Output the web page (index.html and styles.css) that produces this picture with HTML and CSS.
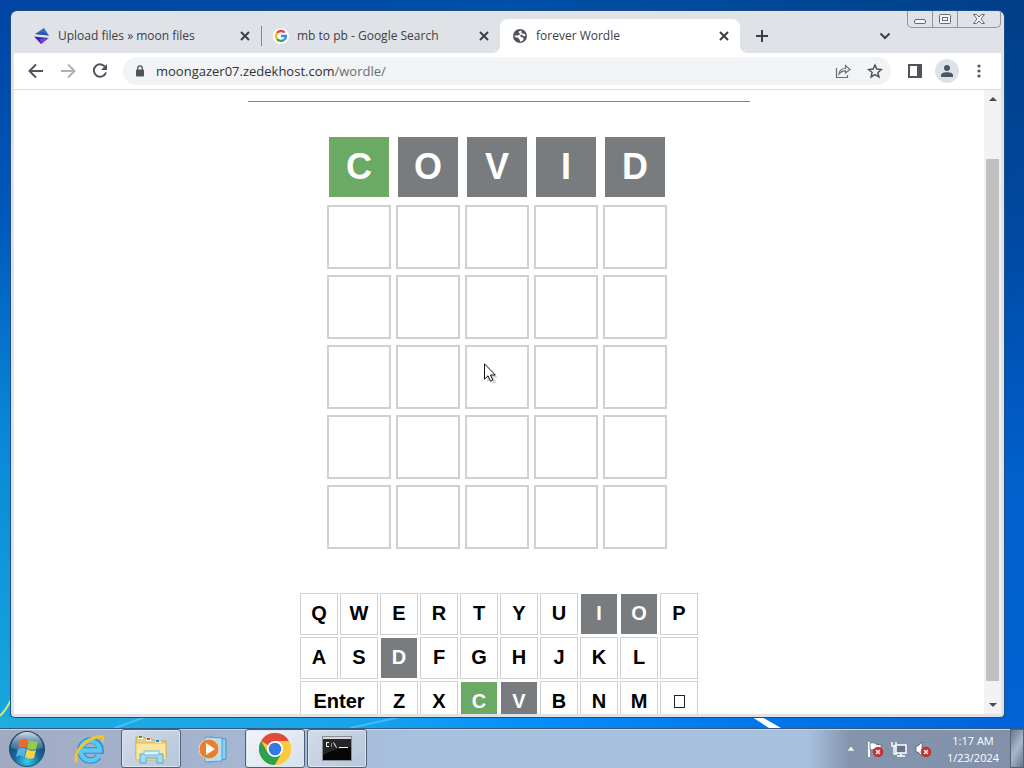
FILE: index.html
```html
<!DOCTYPE html>
<html lang="en">
<head>
<meta charset="utf-8">
<title>forever Wordle</title>
<link rel="stylesheet" href="styles.css">
</head>
<body>
<div class="desktop">
  <main class="workspace">
    <svg class="streaks" viewBox="0 0 1024 728" preserveAspectRatio="none" aria-hidden="true">
      <path d="M0 716Q6 710 11 700" stroke="#c8ee70" stroke-width="2" fill="none"/>
      <path d="M115 728L145 717M350 728L400 717" stroke="#8fe0ff" stroke-width="2" opacity=".4"/>
      <path d="M752 717h10l19 11h-12z" fill="#fff"/>
    </svg>
    <section class="window">
      <header class="tabstrip">
        <div class="tabs">
          <div class="tab">
            <svg class="favicon" viewBox="0 0 16 16"><path d="M1 6L10 0l5 7.500z" fill="#3a6cc0"/><path d="M1 6l8-2 6 3.500z" fill="#2452a8"/><path d="M0 8.500l14.500 1.500L7 16z" fill="#4b1fb4"/><path d="M6 11l8.500-1L7 16z" fill="#6a48cc"/></svg>
            <span class="title">Upload files » moon files</span>
            <button class="close" aria-label="Close tab"><svg viewBox="0 0 10 10"><path d="M1 1l8 8M9 1L1 9"/></svg></button>
          </div>
          <div class="tab divided">
            <svg class="favicon" viewBox="0 0 16 16"><circle cx="8" cy="8" r="8" fill="#fff"/><g fill="none" stroke-width="2.3"><path d="M4 5A5 5 0 0 1 11.6 4.5" stroke="#ea4335"/><path d="M4 5a5 5 0 0 0 0 6" stroke="#fbbc05"/><path d="M4 11a5 5 0 0 0 7.3.7" stroke="#34a853"/><path d="M8 8h5a5 5 0 0 1-1.700 3.700" stroke="#4285f4"/></g></svg>
            <span class="title">mb to pb - Google Search</span>
            <button class="close" aria-label="Close tab"><svg viewBox="0 0 10 10"><path d="M1 1l8 8M9 1L1 9"/></svg></button>
          </div>
          <div class="tab active">
            <svg class="favicon" viewBox="0 0 16 16"><circle cx="8" cy="8" r="7" fill="#50545a"/><path d="M9 2.500C6.500 3 6 4.500 7.500 5.500S6.500 7.500 5 7.500H2.500C2.500 9 3.500 9.500 5 9.500s1.500 1.500 2.500 2 0 1.500.5 2c3 0 3-1 3.500-2.500S9.500 9.500 8.500 8.500 9 6.500 10 7s1.500 1.500 3.500 1C13.500 6 12 5.500 10.500 5.500S10 3.500 9 2.500z" fill="#fff"/></svg>
            <span class="title">forever Wordle</span>
            <button class="close" aria-label="Close tab"><svg viewBox="0 0 10 10"><path d="M1 1l8 8M9 1L1 9"/></svg></button>
          </div>
        </div>
        <button class="newtab" aria-label="New tab"><svg viewBox="0 0 12 12"><path d="M6 0v12M0 6h12"/></svg></button>
        <button class="tabsearch" aria-label="Search tabs"><svg viewBox="0 0 12 8"><path d="M1.500 1.500L6 6l4.500-4.500"/></svg></button>
        <div class="caption">
          <button aria-label="Minimize"><svg viewBox="0 0 14 12"><rect x="1.500" y="6.500" width="11" height="4" rx="1.500"/></svg></button>
          <button aria-label="Maximize"><svg viewBox="0 0 14 12"><rect x="1.500" y="1.500" width="11" height="9" rx="1"/><rect x="4.500" y="4.500" width="5" height="3"/></svg></button>
          <button class="wide" aria-label="Close"><svg viewBox="0 0 14 12"><path d="M1.500 1.500h3L7 4l2.500-2.500h3L9 6l3.500 4.500h-3L7 8l-2.500 2.500h-3L5 6z"/></svg></button>
        </div>
      </header>
      <div class="client">
        <nav class="toolbar">
          <button class="tool" aria-label="Back"><svg viewBox="0 0 16 16"><path d="M15 8H2M8 1.500L1.500 8 8 14.500" class="line"/></svg></button>
          <button class="tool off" aria-label="Forward"><svg viewBox="0 0 16 16"><path d="M1 8h13M8 1.500L14.500 8 8 14.500" class="line"/></svg></button>
          <button class="tool" aria-label="Reload"><svg viewBox="0 0 16 16"><path d="M13.500 4.500A6.200 6.200 0 1 0 14 9.500" class="line"/><path d="M15 1v6H9z" fill="#50545a"/></svg></button>
          <div class="omnibox">
            <svg class="lock" viewBox="0 0 10 12"><rect x="1" y="4.500" width="8" height="7" rx="1" fill="#50545a"/><path d="M2.800 5V3a2.200 2.200 0 0 1 4.400 0v2" fill="none" stroke="#50545a" stroke-width="1.300"/></svg>
            <a class="url" href="#">moongazer07.zedekhost.com<span>/wordle/</span></a>
            <button class="tool" aria-label="Share"><svg viewBox="0 0 16 16"><path d="M1.500 5v9.500h11V12M4 11c.5-4 3-5.500 6.500-5.500V2.500L15 6.500 10.500 10V7.800C7.500 7.800 5.500 9 4 11z" fill="none" stroke="#6a6e74" stroke-width="1.200"/></svg></button>
            <button class="tool" aria-label="Bookmark"><svg viewBox="0 0 16 16"><path d="M8 2l1.800 4.100 4.500.4-3.400 3 1 4.400L8 11.600l-3.900 2.300 1-4.400-3.400-3 4.500-.4z" fill="none" stroke="#50545a" stroke-width="1.500"/></svg></button>
          </div>
          <button class="tool" aria-label="Side panel"><svg viewBox="0 0 16 16"><path d="M2 2h12v12H2z" fill="none" stroke="#50545a" stroke-width="2"/><path d="M10 2h4v12h-4z" fill="#50545a"/></svg></button>
          <button class="tool avatar" aria-label="Profile"><svg viewBox="0 0 16 16"><circle cx="8" cy="5" r="3" fill="#4a5768"/><path d="M2 14v-1.500C2 10 5 9.300 8 9.300s6 .7 6 3.200V14z" fill="#4a5768"/></svg></button>
          <button class="tool" aria-label="Menu"><svg viewBox="0 0 16 16" fill="#50545a"><circle cx="8" cy="3" r="1.600"/><circle cx="8" cy="8" r="1.600"/><circle cx="8" cy="13" r="1.600"/></svg></button>
        </nav>
        <div class="viewport">
          <article class="page">
            <hr>
            <div class="board">
              <div class="tile hit">C</div><div class="tile miss">O</div><div class="tile miss">V</div><div class="tile miss">I</div><div class="tile miss">D</div>
              <div class="tile"></div><div class="tile"></div><div class="tile"></div><div class="tile"></div><div class="tile"></div>
              <div class="tile"></div><div class="tile"></div><div class="tile"></div><div class="tile"></div><div class="tile"></div>
              <div class="tile"></div><div class="tile"></div><div class="tile"></div><div class="tile"></div><div class="tile"></div>
              <div class="tile"></div><div class="tile"></div><div class="tile"></div><div class="tile"></div><div class="tile"></div>
              <div class="tile"></div><div class="tile"></div><div class="tile"></div><div class="tile"></div><div class="tile"></div>
            </div>
            <div class="keyboard">
              <button>Q</button><button>W</button><button>E</button><button>R</button><button>T</button><button>Y</button><button>U</button><button class="miss">I</button><button class="miss">O</button><button>P</button>
              <button>A</button><button>S</button><button class="miss">D</button><button>F</button><button>G</button><button>H</button><button>J</button><button>K</button><button>L</button><button aria-label="Blank"></button>
              <button class="enter">Enter</button><button>Z</button><button>X</button><button class="hit">C</button><button class="miss">V</button><button>B</button><button>N</button><button>M</button><button aria-label="Backspace"><span class="tofu"></span></button>
            </div>
          </article>
          <div class="scrollbar">
            <button aria-label="Scroll up"><svg viewBox="0 0 8 4"><path d="M0 4l4-4 4 4z"/></svg></button>
            <div class="before"></div>
            <div class="thumb"></div>
            <div class="after"></div>
            <button aria-label="Scroll down"><svg viewBox="0 0 8 4"><path d="M0 0h8L4 4z"/></svg></button>
          </div>
        </div>
      </div>
    </section>
    <svg class="cursor" viewBox="0 0 14 21" aria-hidden="true"><path d="M3 3v16l4-3 2.500 5 3-1.500L10 15h4z" fill="#000" opacity=".15"/><path d="M.5.8v15.400L4 12.800l2.400 5.400 2.400-1-2.300-5.200h4.800z" fill="#fff" stroke="#111"/></svg>
  </main>
  <footer class="taskbar">
    <button class="start" aria-label="Start"><svg viewBox="0 0 36 36">
      <defs><radialGradient id="orb" cx=".5" cy=".85" r=".8"><stop offset="0" stop-color="#35d0ee"/><stop offset=".45" stop-color="#176a9c"/><stop offset="1" stop-color="#123a60"/></radialGradient><linearGradient id="shine" x2="0" y2="1"><stop offset="0" stop-color="#e8f2fa" stop-opacity=".9"/><stop offset="1" stop-color="#7fa8c8" stop-opacity=".25"/></linearGradient></defs>
      <circle cx="18" cy="18" r="17.500" fill="url(#orb)" stroke="#254a6c"/><path d="M2 17a16 16 0 0 1 32 0Q18 22 2 17z" fill="url(#shine)"/>
      <path d="M11 9q4-3 8 0l-2 8q-4-2-8 0z" fill="#ee6a2c"/><path d="M20 9q4 3 9 1l-2 8q-5 2-9-1z" fill="#9acb45"/><path d="M9 18q4-2 8 0l-2 8q-4-3-8 0z" fill="#55b2ea"/><path d="M18 18q4 3 9 1l-2 8q-5 2-9-1z" fill="#fbd345"/></svg></button>
    <button class="task" aria-label="Internet Explorer"><svg viewBox="0 0 32 32"><g fill="none"><path d="M9 17.500h18.500A10 10 0 1 0 25.500 23.500" stroke="#268fd0" stroke-width="6.500"/><path d="M9 17.500h18A9.700 9.700 0 1 0 25.500 23" stroke="#5cc8f2" stroke-width="4.500"/><path d="M4 29.500C-1 21 12 4 29 3.500c2 0 1 3 0 5" stroke="#f0c62c" stroke-width="2.800"/></g></svg></button>
    <button class="task open" aria-label="Windows Explorer"><svg viewBox="0 0 32 32"><path d="M1 4h8l2 2h6l2 2h12v16H1z" fill="#e9cf76" stroke="#c9a94c"/><path d="M3 5h5M11 7h5M20 9h6" stroke="#fff" stroke-width="2"/><path d="M4 4h3" stroke="#35a244" stroke-width="2"/><path d="M12 6h3" stroke="#cf5136" stroke-width="2"/><path d="M21 8h3" stroke="#2f83c4" stroke-width="2"/><path d="M1 10h30v17H1z" fill="#f8e7a0" stroke="#d9bd65"/><path d="M5 30v-9h23v9h-6v-5H11v5z" fill="#a3dcf2" stroke="#55a8cc"/><path d="M9 18h15v4H9z" fill="#d8f1fa" stroke="#74bcd8"/></svg></button>
    <button class="task" aria-label="Windows Media Player"><svg viewBox="0 0 32 32"><path d="M13 4l16 2v20l-16 3z" fill="#8ecdee" stroke="#4795c2"/><path d="M8 4l17 1v23L8 29z" fill="#b4e0f4" stroke="#569fc8"/><circle cx="12" cy="16" r="10" fill="#ee7d27" stroke="#d7dce2"/><path d="M9 10l9 6-9 6z" fill="#fff"/></svg></button>
    <button class="task open current" aria-label="Google Chrome"><svg viewBox="0 0 32 32"><circle cx="16" cy="16" r="16" fill="#fccb3c"/><path d="M16 16L2.100 8A16 16 0 0 1 29.900 8H16z" fill="#e24a3b"/><path d="M2.100 8A16 16 0 0 0 16 32l7-12-14 0z" fill="#2fa04f"/><path d="M29.900 8H16v8l7 4-7 12A16 16 0 0 0 29.900 8z" fill="#fccb3c"/><circle cx="16" cy="16" r="8" fill="#fff"/><circle cx="16" cy="16" r="6.300" fill="#3578e5"/></svg></button>
    <button class="task open" aria-label="Command Prompt"><svg viewBox="0 0 32 32"><rect x="1.500" y="3.500" width="29" height="24" fill="#060606" stroke="#8a8e94"/><path d="M2 5h28" stroke="#d4d8de" stroke-width="2"/><path d="M2 6h28v8Q14 15 2 22z" fill="#fff" opacity=".13"/><g stroke="#fff" fill="none"><path d="M8 9.500H5.500v4H8M10.500 10.500v1M10.500 12.500v1M12.500 9.500l3 5M18 14.500h9"/></g></svg></button>
    <div class="tray">
      <svg class="up" viewBox="0 0 8 5"><path d="M0 5l4-5 4 5z" fill="#fff" stroke="#59687e" stroke-width=".5"/></svg>
      <svg viewBox="0 0 16 16"><path d="M2 1v15" stroke="#fff" stroke-width="2"/><path d="M3 2q4-1 6 1t5 0v7q-3 1-5-.5T3 9z" fill="#fff" stroke="#4b586c" stroke-width=".7"/><circle cx="11" cy="11" r="4.800" fill="#d52b28" stroke="#a31b1b" stroke-width=".6"/><path d="M9 9l4 4M13 9l-4 4" stroke="#fff" stroke-width="1.400"/></svg>
      <svg viewBox="0 0 16 16"><path d="M5 4h10v8H5z" fill="#66758a" stroke="#fff" stroke-width="1.500"/><path d="M10 12v3M6 15h8" stroke="#fff" stroke-width="1.500"/><path d="M1 1v4h4V1M3 5v8h3" fill="none" stroke="#fff" stroke-width="1.400"/></svg>
      <svg viewBox="0 0 16 16"><path d="M1 5h2l4-4v14l-4-4H1z" fill="#fff" stroke="#4b586c" stroke-width=".7"/><circle cx="11" cy="11" r="4.800" fill="#d52b28" stroke="#a31b1b" stroke-width=".6"/><path d="M9 9l4 4M13 9l-4 4" stroke="#fff" stroke-width="1.400"/></svg>
      <div class="clock"><time>1:17 AM</time><time>1/23/2024</time></div>
    </div>
    <button class="peek" aria-label="Show desktop"></button>
  </footer>
</div>
</body>
</html>
```
FILE: styles.css
```css
* { box-sizing: border-box; }
body { margin: 0; font-family: "Open Sans", "Noto Sans", sans-serif; font-size: 12px; color: #3c4043; }
button { border: 0; padding: 0; background: none; font: inherit; color: inherit; display: flex; align-items: center; justify-content: center; flex: none; }
svg { display: block; flex: none; }

.desktop { display: flex; flex-direction: column; height: 100vh; overflow: hidden; }
.workspace {
  position: relative; flex: 1; min-height: 0; display: flex; padding: 11px 20px 11px 11px;
  background:
    linear-gradient(90deg, #20acdc, #18a4ec 35%, #0890f8 50%, #0078ec 73%, #0062d8) bottom / 100% 11px no-repeat,
    linear-gradient(#003f86, #0048a0 30%, #0060cc 65%, #0062d4) right / 20px 100% no-repeat,
    linear-gradient(#0044a4, #0058bc 30%, #0a88d8 60%, #18a8dc) left / 11px 100% no-repeat,
    linear-gradient(90deg, #0044a4, #0050a8 50%, #003f88);
}
.streaks { position: absolute; inset: 0; width: 100%; height: 100%; }
.cursor { position: absolute; left: 484px; top: 363px; width: 14px; height: 21px; }

.window {
  position: relative; flex: 1; min-width: 0; display: flex; flex-direction: column;
  padding: 0 3px 3px; border-radius: 6px 6px 4px 4px; background: #dfe2e7; box-shadow: 0 0 0 1px #1c4f86;
}
.tabstrip { display: flex; height: 42px; padding: 8px 0 0 8px; }
.tabs { display: flex; }
.tab { position: relative; width: 239px; display: flex; align-items: center; gap: 8px; padding: 0 6px 0 12px; }
.tab.active { background: #fff; border-radius: 8px 8px 0 0; width: 240px; }
.tab.active::before, .tab.active::after { content: ""; position: absolute; bottom: 0; width: 8px; height: 8px; }
.tab.active::before { right: 100%; background: radial-gradient(circle at 0 0, transparent 8px, #fff 8px); }
.tab.active::after { left: 100%; background: radial-gradient(circle at 100% 0, transparent 8px, #fff 8px); }
.divided::before { content: ""; position: absolute; left: 0; top: 7px; width: 1px; height: 20px; background: #83878c; }
.favicon { width: 16px; height: 16px; }
.title { flex: 1; padding-bottom: 2px; white-space: nowrap; overflow: hidden; }
.close { width: 20px; height: 20px; }
.close svg { width: 10px; height: 10px; }
.close path, .newtab path, .tabsearch path { fill: none; stroke: #3c4043; stroke-width: 2; }
.newtab { width: 28px; margin-left: 8px; }
.newtab svg { width: 12px; height: 12px; }
.tabsearch { width: 28px; margin-left: auto; }
.tabsearch svg { width: 12px; height: 8px; }
.caption { display: flex; align-self: flex-start; height: 17px; margin: -8px 0 0 8px; border: 1px solid #90949c; border-top: 0; border-radius: 0 0 5px 5px; }
.caption button { width: 25px; border-right: 1px solid #90949c; }
.caption .wide { width: 42px; border-right: 0; }
.caption svg { width: 14px; height: 12px; fill: #f4f6f8; stroke: #666a76; }

.client { flex: 1; min-height: 0; display: flex; flex-direction: column; background: #fff; }
.toolbar { display: flex; align-items: center; gap: 8px; height: 37px; padding: 0 10px; border-bottom: 1px solid #dadce0; }
.tool { width: 24px; height: 24px; }
.tool svg { width: 16px; height: 16px; }
.line { fill: none; stroke: #50545a; stroke-width: 2; }
.off { opacity: .45; }
.omnibox { flex: 1; display: flex; align-items: center; gap: 8px; height: 28px; margin: 0 4px 0 3px; padding: 0 4px 0 12px; border-radius: 14px; background: #f1f3f4; }
.lock { width: 10px; height: 12px; }
.url { flex: 1; margin-left: 3px; font-size: 13px; color: #303236; text-decoration: none; white-space: nowrap; }
.url span { color: #6a6e73; }
.avatar { border-radius: 50%; background: #dde1e8; }

.viewport { flex: 1; min-height: 0; display: flex; overflow: hidden; }
.page { flex: 1; display: flex; flex-direction: column; align-items: center; overflow: hidden; font-family: "Liberation Sans", Arial, sans-serif; font-weight: bold; color: #000; }
hr { flex: none; width: 502px; max-width: 100%; margin: 11px 0 33px; border: 0; border-top: 1px solid #85868a; }
.board { flex: none; display: grid; grid-template-columns: repeat(5, 64px); gap: 6px 5px; padding-right: 4px; }
.tile { height: 64px; border: 2px solid #d0d0d2; display: flex; align-items: center; justify-content: center; font-size: 36px; }
.keyboard { flex: none; display: grid; grid-template-columns: repeat(10, 38px); gap: 2px; margin-top: 44px; }
.keyboard button { height: 42px; padding-bottom: 1px; border: 1px solid #d0d0d2; font-size: 20px; background: #fff; }
.keyboard .enter { grid-column: span 2; }
.tile.hit, .tile.miss, .keyboard .hit, .keyboard .miss { border-color: #fff; background-clip: padding-box; color: #fff; }
.tile.hit, .keyboard .hit { background-color: #6aaa64; }
.tile.miss, .keyboard .miss { background-color: #787c7e; }
.tofu { width: 11px; height: 13px; border: 1px solid #222; }

.scrollbar { width: 17px; display: flex; flex-direction: column; align-items: stretch; padding: 0 2px; background: #f1f2f3; }
.scrollbar button { height: 18px; }
.scrollbar svg { width: 8px; height: 4px; fill: #484b50; }
.before { flex: 51; }
.thumb { flex: 522; background: #c0c0c0; }
.after { flex: 15; }

.taskbar {
  display: flex; align-items: center; height: 40px; border-top: 1px solid #35597f; box-shadow: inset 0 1px #c9d6e6;
  background: linear-gradient(90deg, #a0abc2, #a4b4cf 20%, #a7c0dd 40%, #a7c0dd 79%, #8494ad 83%, #8291a9);
}
.start { width: 36px; height: 36px; margin: 0 14px 0 9px; }
.start svg { width: 36px; height: 36px; }
.task { width: 60px; height: 39px; margin-right: 2px; border-radius: 3px; }
.task svg { width: 32px; height: 32px; }
.open { border: 1px solid #4d6076; background: linear-gradient(135deg, #d3dce8, #b4c5db); box-shadow: inset 0 0 0 1px #dde7f1; }
.current { background: linear-gradient(135deg, #f2f5f8, #d5e1ef); }
.tray { margin-left: auto; display: flex; align-items: center; gap: 8px; color: #fff; }
.tray svg { width: 16px; height: 16px; }
.tray .up { width: 8px; height: 5px; margin-right: 4px; }
.clock { display: flex; flex-direction: column; align-items: center; width: 66px; margin-left: 1px; line-height: 17px; font-size: 11px; }
.peek { width: 14px; height: 39px; margin-left: 4px; border: 1px solid #536277; background: linear-gradient(120deg, #66768e, #a9b8c8 50%, #66768e); }
```
